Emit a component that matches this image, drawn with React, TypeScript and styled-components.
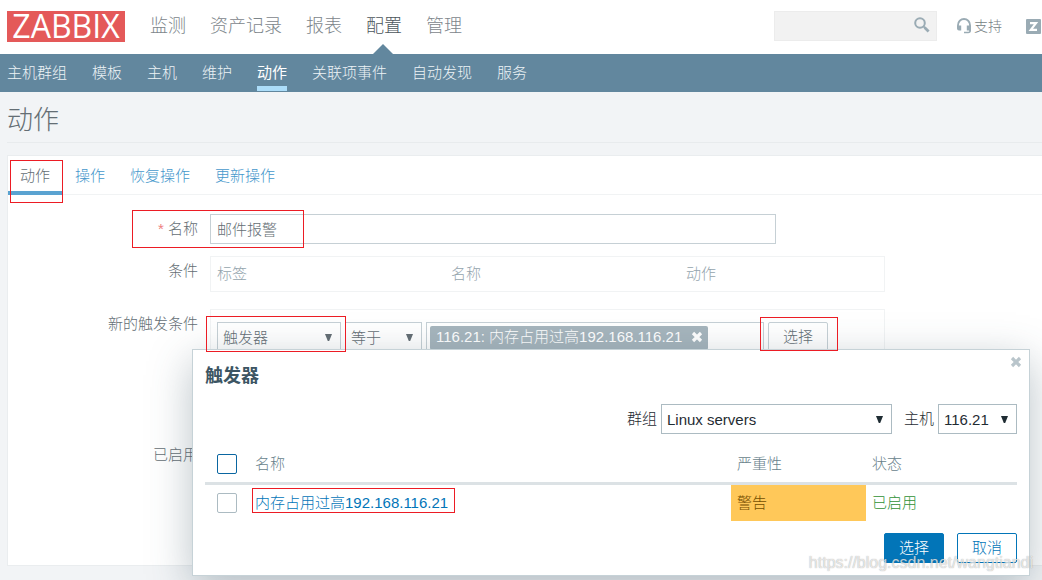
import React from "react";
import styled, { createGlobalStyle } from "styled-components";

const GlobalStyle = createGlobalStyle`
  * { box-sizing: border-box; }
  html, body { margin: 0; overflow-x: hidden; }
  body {
    background: #f2f4f6;
    color: #646e74;
    font: 300 15px/20px "Liberation Sans", "Noto Sans CJK SC", sans-serif;
  }
  input, select, button { font: inherit; color: inherit; margin: 0; }
  a { text-decoration: none; color: inherit; }
`;

const Page = styled.div`
  position: relative;
  min-height: 580px;
  overflow: hidden;
`;

const TopBar = styled.header`
  display: flex;
  align-items: center;
  height: 54px;
  padding: 0 1px 2px 7px;
  background: #fff;
`;

const Logo = styled.a`
  width: 118px;
  height: 31px;
  margin-right: 25px;
  background: #e45959;
  color: #fff;
  font: 400 32px/30px "Open Sans", sans-serif;
  text-align: center;
`;

const MainNav = styled.nav`
  display: flex;
  gap: 24px;
  font-size: 18px;
  line-height: 54px;
`;

const MainLink = styled.a<{ $active?: boolean }>`
  position: relative;
  color: ${(p) => (p.$active ? "#4c565c" : "#7d868b")};
  ${(p) =>
    p.$active &&
    `&::after {
      content: "";
      position: absolute;
      left: 50%;
      bottom: -1px;
      margin-left: -11px;
      border: 10px solid transparent;
      border-top: 0;
      border-bottom-color: #62879e;
    }`}
`;

const TopTools = styled.div`
  display: flex;
  align-items: center;
  margin-left: auto;
`;

const SearchBox = styled.div`
  position: relative;
  display: flex;
  margin-right: 20px;
`;

const SearchInput = styled.input`
  width: 163px;
  height: 30px;
  padding: 0 32px 0 6px;
  border: 1px solid #ececec;
  background: #f2f2f2;
`;

const SearchButton = styled.button`
  position: absolute;
  top: 6px;
  right: 7px;
  width: 16px;
  height: 16px;
  padding: 0;
  border: 0;
  background: none;
`;

const Icon = styled.svg`
  display: block;
  flex: none;
`;

const SupportLink = styled.a`
  display: flex;
  align-items: center;
  gap: 3px;
  margin-right: 24px;
  font-size: 14px;
  color: #757e83;
`;

const SubNav = styled.nav`
  display: flex;
  gap: 25px;
  height: 38px;
  padding: 0 7px;
  background: #62879e;
  line-height: 38px;
`;

const SubLink = styled.a<{ $active?: boolean }>`
  height: 37px;
  color: ${(p) => (p.$active ? "#fff" : "#edf3f6")};
  font-weight: ${(p) => (p.$active ? 400 : 300)};
  border-bottom: ${(p) => (p.$active ? "5px solid #acddf9" : "0")};
`;

const Title = styled.h1`
  margin: 0 0 12px 7px;
  height: 51px;
  border-bottom: 1px solid #e8ebed;
  font-size: 26px;
  font-weight: 300;
  line-height: 56px;
`;

const Panel = styled.main`
  margin-left: 7px;
  padding-bottom: 95px;
  background: #fff;
  border: 1px solid #eaedef;
  border-right: 0;
`;

const Tabs = styled.nav`
  display: flex;
  gap: 1px;
  height: 39px;
  border-bottom: 1px solid #f1f3f4;
`;

const Tab = styled.a<{ $active?: boolean }>`
  position: relative;
  height: 39px;
  padding: 0 12px;
  line-height: 40px;
  color: ${(p) => (p.$active ? "#646e74" : "#4698cc")};
  border-bottom: ${(p) => (p.$active ? "4px solid #5aa3d1" : "0")};
`;

const Form = styled.form`
  padding-top: 19px;
`;

const Row = styled.div<{ $gap?: number }>`
  position: relative;
  display: flex;
  align-items: flex-start;
  margin-bottom: ${(p) => p.$gap ?? 12}px;
`;

const Label = styled.label`
  width: 190px;
  margin-right: 12px;
  text-align: right;
  line-height: 30px;
`;

const Required = styled.span`
  color: #ee8080;
`;

const NameInput = styled.input`
  width: 566px;
  height: 30px;
  padding: 0 6px 2px;
  border: 1px solid #c6d0d5;
  background: #fff;
`;

const ConditionTable = styled.table`
  width: 675px;
  height: 36px;
  border: 1px solid #f1f3f4;
  border-collapse: separate;
  border-spacing: 0;
  table-layout: fixed;

  th {
    padding: 0 6px;
    color: #94a4ad;
    font-weight: 300;
    text-align: left;
  }
`;

const NewCondition = styled.div`
  display: flex;
  align-items: flex-start;
  gap: 4px;
  width: 675px;
  height: 119px;
  padding: 12px 6px;
  border: 1px solid #f1f3f4;
`;

const SelectWrap = styled.span<{ $width: number; $dark?: boolean }>`
  position: relative;
  display: inline-block;
  width: ${(p) => p.$width}px;
  height: 30px;
  color: ${(p) => (p.$dark ? "#1f2c33" : "#646e74")};

  select {
    appearance: none;
    display: block;
    width: 100%;
    height: 30px;
    padding: 2px 20px 0 5px;
    border: 1px solid ${(p) => (p.$dark ? "#acbbc2" : "#c6d0d5")};
    border-radius: 0;
    background: #fff;
  }

  svg {
    position: absolute;
    top: 12px;
    right: 9px;
    pointer-events: none;
  }
`;

const MultiSelect = styled.div`
  width: 338px;
  height: 30px;
  padding: 3px;
  border: 1px solid #c6d0d5;
`;

const Chip = styled.span`
  display: flex;
  align-items: center;
  gap: 9px;
  width: max-content;
  height: 24px;
  padding: 0 5px 2px 6px;
  border-radius: 2px;
  background: #a6b5bd;
  color: #fff;
`;

const IconButton = styled.button`
  display: flex;
  padding: 0;
  border: 0;
  background: none;
`;

const Button = styled.button<{ $kind?: "primary" | "outline" }>`
  width: 60px;
  height: 30px;
  padding: 0;
  border: 1px solid ${(p) => (p.$kind ? "#0275b8" : "#c6d0d5")};
  border-radius: 2px;
  background: ${(p) => (p.$kind === "primary" ? "#0275b8" : "#fff")};
  color: ${(p) => (p.$kind === "primary" ? "#fff" : p.$kind ? "#0275b8" : "#646e74")};
`;

const Mark = styled.span<{ $x: number; $y: number; $w: number; $h: number }>`
  position: absolute;
  z-index: 5;
  left: ${(p) => p.$x}px;
  top: ${(p) => p.$y}px;
  width: ${(p) => p.$w}px;
  height: ${(p) => p.$h}px;
  border: 1px solid #ec1c24;
  pointer-events: none;
`;

const Dialog = styled.section`
  position: absolute;
  z-index: 2;
  top: 349px;
  left: 192px;
  right: 12px;
  padding: 12px;
  background: #fff;
  border: 1px solid #c6d2d7;
  box-shadow: 0 12px 40px rgba(56, 84, 96, 0.35);
  color: #1f2c33;
`;

const DialogTitle = styled.h2`
  margin: 0;
  color: #3c5563;
  font-size: 18px;
  font-weight: 700;
  line-height: 28px;
`;

const CloseButton = styled(IconButton)`
  position: absolute;
  top: 6px;
  right: 7px;
`;

const Filters = styled.div`
  display: flex;
  justify-content: flex-end;
  align-items: center;
  gap: 4px;
  margin: 14px 0 12px;
`;

const HostLabel = styled.label`
  margin-left: 8px;
`;

const Triggers = styled.table`
  width: 100%;
  border-collapse: separate;
  border-spacing: 0;
  table-layout: fixed;

  th, td {
    height: 36px;
    padding: 0 6px;
    text-align: left;
    font-weight: 300;
  }
  th {
    height: 39px;
    color: #687f8b;
    border-bottom: 3px solid #dce2e5;
  }
  th:first-child, td:first-child { width: 44px; padding-left: 12px; }
`;

const CheckBox = styled.input<{ $strong?: boolean }>`
  appearance: none;
  display: block;
  width: 20px;
  height: 20px;
  border: 1px solid ${(p) => (p.$strong ? "#0a66a1" : "#acbbc2")};
  border-radius: 2px;
  background: #fff;
`;

const FixedTh = styled.th<{ $w: number }>`
  width: ${(p) => p.$w}px;
`;

const NameCell = styled.td`
  position: relative;
  color: #0275b8;
`;

const Severity = styled.td`
  background: #ffc859;
  color: #734d00;
`;

const Status = styled.td`
  color: #2f9135;
`;

const Actions = styled.div`
  display: flex;
  justify-content: flex-end;
  gap: 13px;
  margin-top: 12px;
`;

const Watermark = styled.div`
  position: absolute;
  z-index: 6;
  right: 9px;
  bottom: 7px;
  color: rgba(255, 255, 255, 0.7);
  font: 400 16px/20px "Liberation Sans", sans-serif;
  text-shadow: 0 0 1px rgba(90, 90, 90, 0.6);
  pointer-events: none;
`;

const Cross = ({ color }: { color: string }) => (
  <Icon width="12" height="12" viewBox="0 0 12 12">
    <path d="M2 2l8 8M10 2l-8 8" stroke={color} strokeWidth="3.2" />
  </Icon>
);

type PickProps = { id: string; label?: string; value: string; width: number; dark?: boolean };

const Pick = ({ id, label, value, width, dark }: PickProps) => (
  <SelectWrap $width={width} $dark={dark}>
    <select id={id} aria-label={label}>
      <option>{value}</option>
    </select>
    <Icon width="7" height="7" viewBox="0 0 7 7">
      <path d="M0 0h7L4.200 7H2.800z" fill="currentColor" />
    </Icon>
  </SelectWrap>
);

const mainItems = ["监测", "资产记录", "报表", "配置", "管理"];
const subItems = ["主机群组", "模板", "主机", "维护", "动作", "关联项事件", "自动发现", "服务"];
const tabs = ["动作", "操作", "恢复操作", "更新操作"];

export default function App() {
  return (
    <Page>
      <GlobalStyle />
      <TopBar>
        <Logo href="#">ZABBIX</Logo>
        <MainNav>
          {mainItems.map((t) => (
            <MainLink key={t} href="#" $active={t === "配置"}>{t}</MainLink>
          ))}
        </MainNav>
        <TopTools>
          <SearchBox>
            <SearchInput type="text" aria-label="搜索" />
            <SearchButton type="button" aria-label="搜索">
              <Icon width="16" height="16" viewBox="0 0 16 16" fill="none" stroke="#9aabb4">
                <circle cx="6" cy="6" r="4.800" strokeWidth="2" />
                <path d="M9.400 9.400l1.600 1.400" strokeWidth="1.800" />
                <path d="M10.600 10.600l4 4" strokeWidth="2.800" />
              </Icon>
            </SearchButton>
          </SearchBox>
          <SupportLink href="#">
            <Icon width="14" height="16" viewBox="0 0 14 16" fill="none" stroke="#9aabb4">
              <path d="M1 9V7a6 6 0 0 1 12 0v6" strokeWidth="1.800" />
              <path d="M0 7.500h4.200v5H2a2 2 0 0 1-2-2zM14 7.500H9.800v5H14z" fill="#9aabb4" stroke="none" />
              <path d="M13.200 11v1.500q0 2-2 2H7" strokeWidth="1.600" />
            </Icon>
            支持
          </SupportLink>
          <a href="#" aria-label="Share">
            <Icon width="15" height="15" viewBox="0 0 15 15">
              <rect width="15" height="15" rx="1" fill="#9aabb4" />
              <path d="M4 4.200h6L4.800 10.900H11" fill="none" stroke="#fff" strokeWidth="2.200" />
            </Icon>
          </a>
        </TopTools>
      </TopBar>
      <SubNav>
        {subItems.map((t) => (
          <SubLink key={t} href="#" $active={t === "动作"}>{t}</SubLink>
        ))}
      </SubNav>
      <Title>动作</Title>
      <Panel>
        <Tabs>
          {tabs.map((t, i) => (
            <Tab key={t} href="#" $active={i === 0}>
              {t}
              {i === 0 && <Mark $x={2} $y={4} $w={53} $h={43} />}
            </Tab>
          ))}
        </Tabs>
        <Form>
          <Row>
            <Label htmlFor="name"><Required>*</Required> 名称</Label>
            <NameInput id="name" type="text" defaultValue="邮件报警" />
            <Mark $x={124} $y={-4} $w={172} $h={38} />
          </Row>
          <Row $gap={17}>
            <Label as="span">条件</Label>
            <ConditionTable>
              <thead>
                <tr>
                  <FixedTh $w={234}>标签</FixedTh>
                  <FixedTh $w={235}>名称</FixedTh>
                  <th>动作</th>
                </tr>
              </thead>
            </ConditionTable>
          </Row>
          <Row>
            <Label htmlFor="kind">新的触发条件</Label>
            <NewCondition>
              <Pick id="kind" value="触发器" width={124} />
              <Pick id="operator" label="运算符" value="等于" width={77} />
              <MultiSelect>
                <Chip>
                  116.21: 内存占用过高192.168.116.21
                  <IconButton type="button" aria-label="移除"><Cross color="#fff" /></IconButton>
                </Chip>
              </MultiSelect>
              <Button type="button">选择</Button>
            </NewCondition>
            <Mark $x={198} $y={7} $w={140} $h={36} />
            <Mark $x={752} $y={8} $w={78} $h={34} />
          </Row>
          <Row $gap={0}>
            <Label htmlFor="enabled">已启用</Label>
            <CheckBox id="enabled" type="checkbox" />
          </Row>
        </Form>
      </Panel>

      <Dialog role="dialog" aria-labelledby="dialog-title">
        <DialogTitle id="dialog-title">触发器</DialogTitle>
        <CloseButton type="button" aria-label="关闭"><Cross color="#b9c5cb" /></CloseButton>
        <Filters>
          <label htmlFor="group">群组</label>
          <Pick id="group" value="Linux servers" width={231} dark />
          <HostLabel htmlFor="host">主机</HostLabel>
          <Pick id="host" value="116.21" width={79} dark />
        </Filters>
        <Triggers>
          <thead>
            <tr>
              <th><CheckBox type="checkbox" aria-label="全选" $strong /></th>
              <th>名称</th>
              <FixedTh $w={135}>严重性</FixedTh>
              <FixedTh $w={151}>状态</FixedTh>
            </tr>
          </thead>
          <tbody>
            <tr>
              <td><CheckBox type="checkbox" aria-label="内存占用过高192.168.116.21" /></td>
              <NameCell>
                <a href="#">内存占用过高192.168.116.21</a>
                <Mark $x={3} $y={3} $w={203} $h={25} />
              </NameCell>
              <Severity>警告</Severity>
              <Status>已启用</Status>
            </tr>
          </tbody>
        </Triggers>
        <Actions>
          <Button type="button" $kind="primary">选择</Button>
          <Button type="button" $kind="outline">取消</Button>
        </Actions>
      </Dialog>
      <Watermark>https://blog.csdn.net/wangtiandi</Watermark>
    </Page>
  );
}
